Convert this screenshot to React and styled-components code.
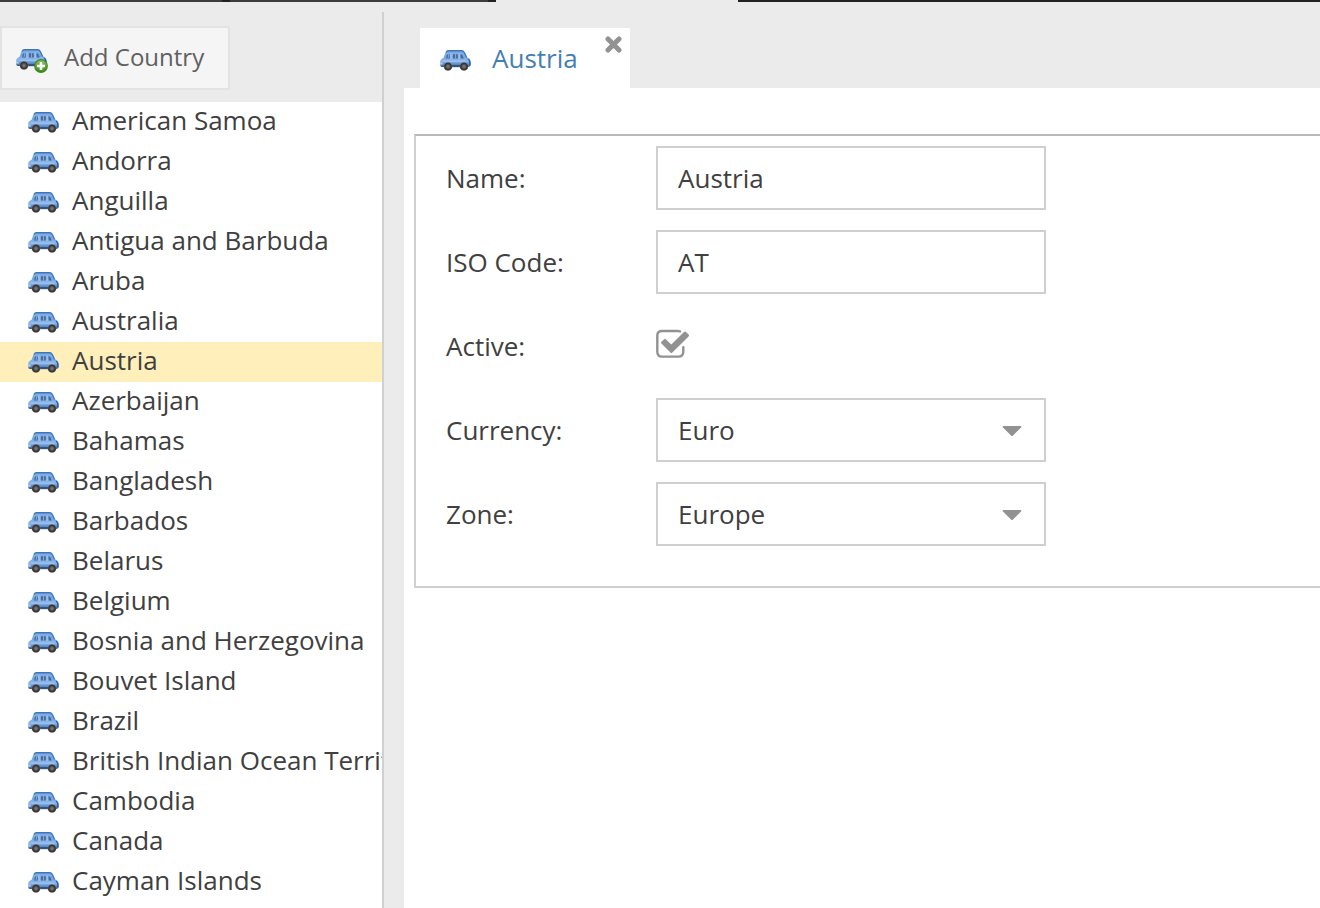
import React, { useState } from "react";
import styled, { createGlobalStyle } from "styled-components";

const GlobalStyle = createGlobalStyle`
  *, *::before, *::after { box-sizing: border-box; }
  html, body, #root { height: 100%; }
  body {
    margin: 0;
    overflow: hidden;
    background: #ebebeb;
    color: #404040;
    font: 26px/36px "Open Sans", "Noto Sans", sans-serif;
  }
  button, input, select { font: inherit; color: inherit; margin: 0; }
`;

const Page = styled.div`
  display: flex;
  flex-direction: column;
  height: 100%;
`;

const TopStrip = styled.div`
  display: flex;
  flex: none;
  height: 2px;
`;

const StripTab = styled.div`
  width: ${(p) => p.$width}px;
  background: ${(p) => (p.$active ? "#ebebeb" : "#3b3c3e")};
  border-right: ${(p) => (p.$active ? "none" : "8px solid #242221")};
`;

const StripRest = styled.div`
  flex: 1;
  background: #242221;
`;

const Workspace = styled.div`
  display: flex;
  flex: 1;
  min-height: 0;
  padding-top: 10px;
`;

const Sidebar = styled.aside`
  display: flex;
  flex-direction: column;
  flex: none;
  width: 384px;
  border-right: 2px solid #d0d0d0;
`;

const Toolbar = styled.div`
  display: flex;
  flex: none;
  padding: 14px 0 12px;
`;

const ToolButton = styled.button`
  display: flex;
  align-items: center;
  gap: 16px;
  height: 64px;
  padding: 0 24px 2px 14px;
  border: 2px solid #e3e3e3;
  background: #f5f5f5;
  color: #606060;
  font-size: 24px;
`;

const CountryList = styled.ul`
  flex: 1;
  min-height: 0;
  margin: 0;
  padding: 0;
  overflow: hidden;
  list-style: none;
  background: #fff;
`;

const CountryRow = styled.li`
  display: flex;
  align-items: center;
  gap: 12px;
  height: 40px;
  padding: 0 0 4px 28px;
  overflow: hidden;
  white-space: nowrap;
  cursor: default;
  background: ${(p) => (p.$selected ? "#ffefbb" : "transparent")};
`;

const Main = styled.main`
  display: flex;
  flex-direction: column;
  flex: 1;
  min-width: 0;
  padding-left: 20px;
`;

const TabBar = styled.div`
  display: flex;
  flex: none;
  padding: 16px 16px 0;
`;

const Tab = styled.div`
  display: flex;
  align-items: center;
  height: 60px;
  padding-left: 20px;
  background: #fff;
`;

const TabLink = styled.a`
  display: flex;
  align-items: center;
  gap: 20px;
  color: #447fb3;
  text-decoration: none;
`;

const CloseButton = styled.button`
  display: flex;
  align-self: flex-start;
  margin: 8px 8px 0 27px;
  padding: 0;
  border: 0;
  background: none;
`;

const Panel = styled.section`
  flex: 1;
  padding: 46px 0 0 10px;
  background: #fff;
`;

const Form = styled.form`
  display: flex;
  flex-direction: column;
  gap: 20px;
  padding: 10px 30px 40px;
  border: 2px solid #d0d0d0;
  border-top-color: #b9b9b9;
  border-right: 0;
`;

const Field = styled.div`
  display: flex;
  align-items: center;
  height: 64px;
`;

const FieldLabel = styled.label`
  flex: none;
  width: 210px;
`;

const Control = styled.div`
  position: relative;
  display: flex;
  align-items: center;
  flex: 0 1 390px;
`;

const TextInput = styled.input`
  width: 100%;
  height: 64px;
  padding: 0 20px;
  border: 2px solid #cfcfcf;
  border-radius: 0;
  background: #fff;
  outline: none;
`;

const Select = styled.select`
  width: 100%;
  height: 64px;
  padding: 0 60px 0 20px;
  border: 2px solid #cfcfcf;
  border-radius: 0;
  background: #fff;
  appearance: none;
  outline: none;
`;

const Arrow = styled.svg`
  position: absolute;
  right: 24px;
  pointer-events: none;
`;

const Check = styled.input`
  position: absolute;
  width: 34px;
  height: 30px;
  opacity: 0;
`;

const CheckArt = styled.svg`
  margin-bottom: 4px;
`;

const Icon = styled.svg`
  flex: none;
  display: block;
`;

const Defs = styled.svg`
  position: absolute;
`;

function CarDefs() {
  return (
    <Defs width="0" height="0" aria-hidden="true">
      <defs>
        <linearGradient id="carRoof" x1="0" y1="0" x2="0" y2="1">
          <stop offset="0" stopColor="#5488c8" />
          <stop offset="0.3" stopColor="#80afe6" />
          <stop offset="1" stopColor="#6fa2df" />
        </linearGradient>
        <linearGradient id="carBody" x1="0" y1="0" x2="0" y2="1">
          <stop offset="0" stopColor="#7cade6" />
          <stop offset="0.4" stopColor="#8ab6ec" />
          <stop offset="0.75" stopColor="#5687c6" />
          <stop offset="1" stopColor="#2c4d7c" />
        </linearGradient>
        <radialGradient id="carWheel">
          <stop offset="0" stopColor="#8a8583" />
          <stop offset="0.4" stopColor="#5c5a59" />
          <stop offset="0.75" stopColor="#2f2f31" />
          <stop offset="1" stopColor="#6b6b6d" />
        </radialGradient>
        <linearGradient id="addBadge" x1="0" y1="0" x2="0" y2="1">
          <stop offset="0" stopColor="#8abf60" />
          <stop offset="1" stopColor="#3c8c18" />
        </linearGradient>
      </defs>
    </Defs>
  );
}

function CarIcon({ add }) {
  return (
    <Icon width="32" height="32" viewBox="0 -6 32 32" aria-hidden="true">
      <path d="M3.4 10.5 L5.2 5 Q6 2.4 8.6 2.3 H21.4 Q24 2.4 25 4.6 L27.6 10.5 Z" fill="url(#carRoof)" />
      <path d="M6 4.4 Q6.8 2.7 8.8 2.7 H21.2 Q23.4 2.7 24.4 4.8 L26.8 10" fill="none" stroke="#4074b8" strokeWidth="1.2" />
      <path d="M1 11.4 Q3 9.6 5 9.4 H26 Q30.2 9.8 30.6 13 V17 Q30.2 19 28 19 H2 Q.2 19 .2 17 V13.4 Q.3 12 1 11.4Z" fill="url(#carBody)" />
      <path d="M27.4 10.2 Q30.3 11 30.6 14 V17.4 H29 V13.4 Z" fill="#2f5fa4" />
      <path d="M11 17 H21 V19.2 H11 Z" fill="#38537a" />
      <path d="M6 10.6 L7 6.4 H9.8 V10.6 Z M13 6.2 H17.8 V10.4 H13 Z M20.4 6.4 H22 L23.8 10.4 H20.8 Z" fill="#41608c" opacity=".85" />
      <path d="M8.2 6.6 H9.2 L8.6 10 H7.6 Z M15 6.2 H16 V10.4 H15 Z" fill="#a6c3e6" opacity=".7" />
      <path d="M11 5.4 V11 M19.2 5.4 V11" stroke="#9cc3f2" strokeWidth="1.4" />
      <path d="M3 13.2 H26" stroke="#a4c9f5" strokeWidth="1.6" opacity=".6" />
      <path d="M.2 14.6 H2.6 V16.6 H.2 Z" fill="#b9cfe8" />
      <circle cx="8" cy="18.5" r="4.3" fill="url(#carWheel)" />
      <circle cx="24" cy="18.5" r="4.3" fill="url(#carWheel)" />
      {add && (
        <g>
          <circle cx="25" cy="19" r="6.9" fill="#3c8723" />
          <circle cx="25" cy="19" r="5.8" fill="url(#addBadge)" />
          <path d="M25 15 V23 M21 19 H29" stroke="#fff" strokeWidth="2.6" />
        </g>
      )}
    </Icon>
  );
}

const countries = [
  "American Samoa", "Andorra", "Anguilla", "Antigua and Barbuda", "Aruba",
  "Australia", "Austria", "Azerbaijan", "Bahamas", "Bangladesh", "Barbados",
  "Belarus", "Belgium", "Bosnia and Herzegovina", "Bouvet Island", "Brazil",
  "British Indian Ocean Territory", "Cambodia", "Canada", "Cayman Islands",
];

function SelectField({ id, label, options }) {
  return (
    <Field>
      <FieldLabel htmlFor={id}>{label}</FieldLabel>
      <Control>
        <Select id={id} defaultValue={options[0]}>
          {options.map((o) => <option key={o}>{o}</option>)}
        </Select>
        <Arrow width="20" height="14" viewBox="0 -2 20 14" aria-hidden="true">
          <path d="M1.5 1 H18.5 Q20 1.4 19 2.6 L11 10.4 Q10 11.4 9 10.4 L1 2.6 Q0 1.4 1.5 1Z" fill="#929292" />
        </Arrow>
      </Control>
    </Field>
  );
}

function TextField({ id, label, value }) {
  return (
    <Field>
      <FieldLabel htmlFor={id}>{label}</FieldLabel>
      <Control>
        <TextInput id={id} type="text" defaultValue={value} />
      </Control>
    </Field>
  );
}

export default function App() {
  const [active, setActive] = useState(true);
  return (
    <Page>
      <GlobalStyle />
      <CarDefs />
      <TopStrip>
        <StripTab $width={230} />
        <StripTab $width={266} />
        <StripTab $width={242} $active />
        <StripRest />
      </TopStrip>
      <Workspace>
        <Sidebar>
          <Toolbar>
            <ToolButton type="button"><CarIcon add />Add Country</ToolButton>
          </Toolbar>
          <CountryList>
            {countries.map((name) => (
              <CountryRow key={name} $selected={name === "Austria"}>
                <CarIcon />{name}
              </CountryRow>
            ))}
          </CountryList>
        </Sidebar>
        <Main>
          <TabBar>
            <Tab>
              <TabLink href="#austria"><CarIcon />Austria</TabLink>
              <CloseButton type="button" aria-label="Close tab">
                <svg width="17" height="17" viewBox="0 0 17 17" aria-hidden="true">
                  <path d="M3 3 L14 14 M14 3 L3 14" stroke="#929292" strokeWidth="5" strokeLinecap="round" />
                </svg>
              </CloseButton>
            </Tab>
          </TabBar>
          <Panel id="austria">
            <Form>
              <TextField id="name" label="Name:" value="Austria" />
              <TextField id="iso" label="ISO Code:" value="AT" />
              <Field>
                <FieldLabel htmlFor="active">Active:</FieldLabel>
                <Control>
                  <CheckArt width="34" height="30" viewBox="0 0 34 30" aria-hidden="true">
                    <path d="M24 2.3 Q23 2 21.5 2 H6 Q1.3 2 1.3 6.6 V22.8 Q1.3 27.6 6 27.6 H22.4 Q27.3 27.6 27.3 22.8 V18.2" fill="none" stroke="#929292" strokeWidth="2.4" strokeLinecap="round" />
                    {active && (
                      <path d="M5.4 12.8 L8.2 10.2 Q9 9.5 9.8 10.3 L15.3 15.6 L28 3 Q29 2 30 3 L32.6 5.5 Q33.6 6.5 32.6 7.5 L16.4 23.4 Q15.4 24.4 14.4 23.4 L5.4 14.6 Q4.5 13.7 5.4 12.8Z" fill="#929292" />
                    )}
                  </CheckArt>
                  <Check id="active" type="checkbox" checked={active} onChange={(e) => setActive(e.target.checked)} />
                </Control>
              </Field>
              <SelectField id="currency" label="Currency:" options={["Euro", "US Dollar"]} />
              <SelectField id="zone" label="Zone:" options={["Europe", "Asia"]} />
            </Form>
          </Panel>
        </Main>
      </Workspace>
    </Page>
  );
}
